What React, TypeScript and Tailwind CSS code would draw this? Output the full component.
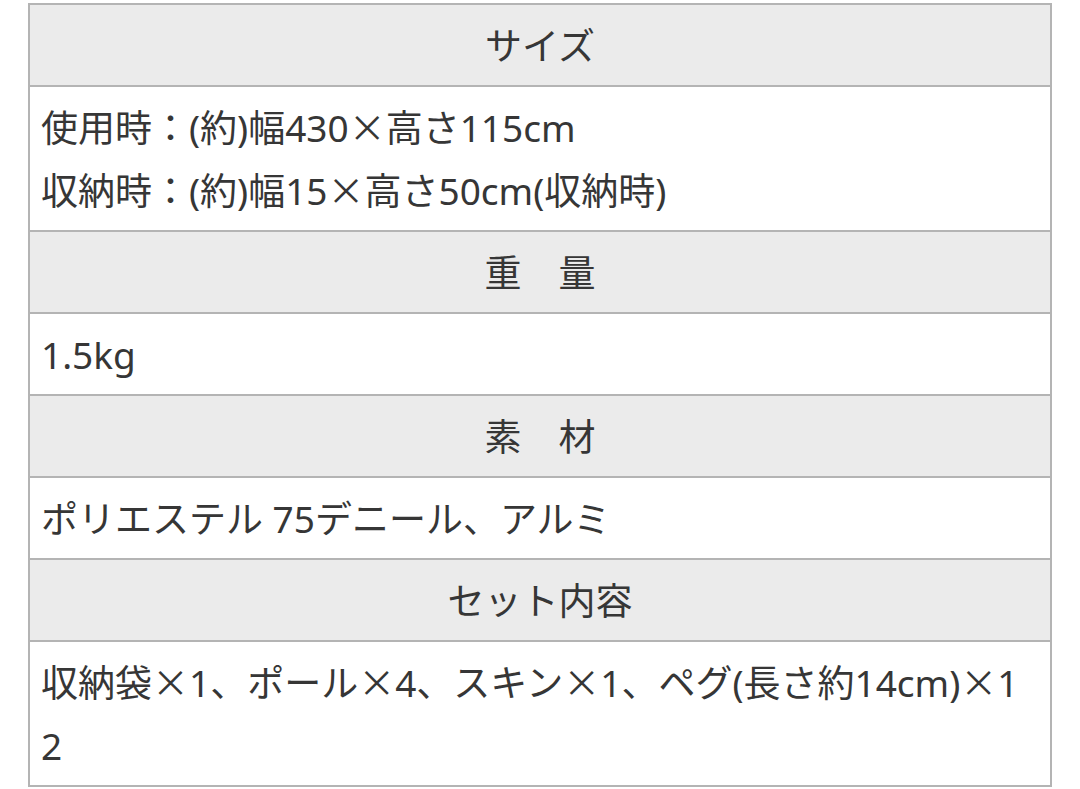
const rows: { head: string; body: string[] }[] = [
  {
    head: "サイズ",
    body: [
      "使用時：(約)幅430×高さ115cm",
      "収納時：(約)幅15×高さ50cm(収納時)",
    ],
  },
  { head: "重　量", body: ["1.5kg"] },
  { head: "素　材", body: ["ポリエステル 75デニール、アルミ"] },
  {
    head: "セット内容",
    body: ["収納袋×1、ポール×4、スキン×1、ペグ(長さ約14cm)×12"],
  },
];

// the multiplication sign is drawn full width by the CJK font
function Line({ text }: { text: string }) {
  const parts = text.split("×");
  return (
    <div>
      {parts.map((p, i) => (
        <span key={i}>
          {i > 0 && <span className="font-['Noto_Sans_CJK_JP'] leading-[0]">×</span>}
          {p}
        </span>
      ))}
    </div>
  );
}

export default function App() {
  return (
    <div
      className="min-h-[789px] bg-white pt-[3px] text-[#363636]"
      style={{ fontFamily: '"Noto Sans", "Noto Sans CJK JP", sans-serif' }}
    >
      <table className="ml-[28px] w-[1024px] border-collapse text-[37px] leading-[63px]">
        <tbody>
          {rows.map((row) => [
            <tr key={row.head + "-h"}>
              <th className="border-2 border-[#b4b4b4] bg-[#ebebeb] px-[11px] pt-[9px] pb-[8px] text-center font-normal">
                {row.head}
              </th>
            </tr>,
            <tr key={row.head + "-b"}>
              <td className="border-2 border-[#b4b4b4] bg-white px-[11px] pt-[9px] pb-[8px] text-left break-all">
                {row.body.map((line, i) => (
                  <Line key={i} text={line} />
                ))}
              </td>
            </tr>,
          ])}
        </tbody>
      </table>
    </div>
  );
}
